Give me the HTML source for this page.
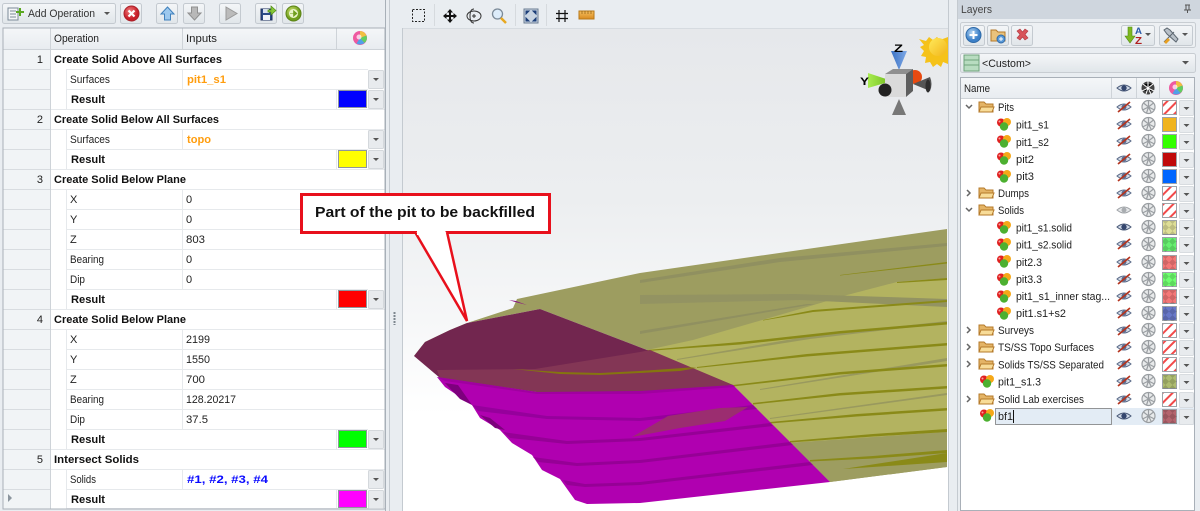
<!DOCTYPE html>
<html><head><meta charset="utf-8"><style>
html,body{margin:0;padding:0;background:#e9edf1;overflow:hidden}
svg{display:block;font-family:"Liberation Sans",Arial,sans-serif;font-size:11px;filter:blur(.3px)}
text{fill:#222}
.b{font-weight:bold;fill:#111}
.o{font-weight:bold;fill:#ff9d0e}
.u{font-weight:bold;fill:#0a0aff}
</style></head><body>
<svg width="1200" height="511" viewBox="0 0 1200 511" xmlns="http://www.w3.org/2000/svg">
<defs>
<linearGradient id="bg" x1="0" y1="0" x2="0" y2="1"><stop offset="0" stop-color="#e6e8eb"/><stop offset=".35" stop-color="#eceef0"/><stop offset=".6" stop-color="#f6f7f8"/><stop offset=".8" stop-color="#fff"/></linearGradient>
<linearGradient id="bt" x1="0" y1="0" x2="0" y2="1"><stop offset="0" stop-color="#f4f6f8"/><stop offset="1" stop-color="#e0e5e9"/></linearGradient>
<linearGradient id="hd" x1="0" y1="0" x2="0" y2="1"><stop offset="0" stop-color="#f4f6f8"/><stop offset="1" stop-color="#e8ecf0"/></linearGradient>
<radialGradient id="red" cx=".4" cy=".35"><stop offset="0" stop-color="#f08080"/><stop offset="1" stop-color="#c81e28"/></radialGradient>
<radialGradient id="grn" cx=".4" cy=".35"><stop offset="0" stop-color="#cde070"/><stop offset="1" stop-color="#6f9e1c"/></radialGradient>
<radialGradient id="blu" cx=".4" cy=".35"><stop offset="0" stop-color="#b8d8f4"/><stop offset="1" stop-color="#3c80c8"/></radialGradient>
<linearGradient id="sunG" x1="0" y1="0" x2="1" y2="1"><stop offset="0" stop-color="#ffe95a"/><stop offset="1" stop-color="#f2b51a"/></linearGradient>
<linearGradient id="coneB" x1="0" y1="0" x2="1" y2="0"><stop offset="0" stop-color="#3b72c4"/><stop offset="1" stop-color="#7fa9e6"/></linearGradient>
<linearGradient id="coneG" x1="0" y1="0" x2="1" y2="0"><stop offset="0" stop-color="#a8ec50"/><stop offset="1" stop-color="#6cb818"/></linearGradient>
<linearGradient id="rul" x1="0" y1="0" x2="0" y2="1"><stop offset="0" stop-color="#f6c060"/><stop offset="1" stop-color="#d88a20"/></linearGradient>
<pattern id="h" width="7" height="7" patternUnits="userSpaceOnUse" patternTransform="rotate(-45)"><rect width="7" height="7" fill="#fff"/><rect width="7" height="2" fill="#f24a4a"/></pattern>
<pattern id="d" width="7" height="7" patternUnits="userSpaceOnUse"><path d="M3.5 0L7 3.5 3.5 7 0 3.5z" fill="#000" fill-opacity=".15"/></pattern>
<g id="dd"><rect x=".5" y=".5" width="15" height="18" rx="1" fill="#e8ebee" stroke="#d4d8dc"/><path d="M5 8h6l-3 3z" fill="#555"/></g>
<g id="dl"><rect x=".5" y=".5" width="14" height="15" rx="1" fill="#e8ebee" stroke="#d8dce0"/><path d="M4.500 7h6l-3 3z" fill="#555"/></g>
<g id="ly"><circle cx="-3" cy="-1.500" r="4" fill="#e02020"/><circle cx="3" cy="-2" r="4" fill="#f5a818"/><circle cx="0" cy="2.500" r="4.200" fill="#4cb030"/><circle cx="-4.500" cy="-2.500" r="1" fill="#f8a0a0"/></g>
<g id="fd"><path d="M-7 5V-5h5l2 2h7v8z" fill="#e4b466" stroke="#b57a2a"/><path d="M-7 5l2-5h13l-2 5z" fill="#f8dc98" stroke="#b57a2a"/></g>
<g id="ey"><path d="M-7 0Q0-6 7 0Q0 6-7 0z" fill="#cfd8e6" stroke="#4a5a78"/><circle r="2.700" fill="#34466e"/></g>
<g id="ex"><path d="M-7 0Q0-6 7 0Q0 6-7 0z" fill="#d4dbe6" stroke="#5a6a88"/><circle r="2.500" fill="#5c6c90"/><path d="M-6 5L6-5" stroke="#b5341e" stroke-width="1.700"/></g>
<g id="eg"><path d="M-7 0Q0-6 7 0Q0 6-7 0z" fill="#e4e6e8" stroke="#a0a4a8"/><circle r="2.500" fill="#a8acb0"/></g>
<g id="wh" fill="none" stroke="#9a9ea2" stroke-width="1.200"><circle r="6.500" fill="#e8eaeb"/><path d="M0-6.500V0M-6 3L0 0 6 3M-5-4L0 0 5-4M0 0L-2 6M0 0L3 6"/></g>
<g id="cb"><rect x="-.5" y="-.5" width="21" height="20" rx="2" fill="url(#bt)" stroke="#c4cad0"/></g>
</defs>

<rect width="1200" height="511" fill="#e9edf1"/>

<!-- LEFT TOOLBAR -->
<rect x="2.500" y="3.500" width="113" height="20" rx="2" fill="url(#bt)" stroke="#c4cad0"/>
<rect x="8" y="8" width="10" height="12" fill="#f4f6f8" stroke="#7b8a98"/><path d="M10 11h6M10 14h6M10 17h6" stroke="#7b8a98"/><path d="M16 11h3V8h2v3h3v2h-3v3h-2v-3h-3z" fill="#5aa820"/>
<text x="28" y="17" textLength="67" lengthAdjust="spacingAndGlyphs" style="fill:#333">Add Operation</text>
<path d="M104 12h6l-3 3z" fill="#555"/>
<use href="#cb" x="121" y="4"/><circle cx="131.500" cy="13.500" r="7.500" fill="url(#red)" stroke="#a82028"/><path d="M128.500 10.500l6 6M134.500 10.500l-6 6" stroke="#fff" stroke-width="2.200"/>
<use href="#cb" x="157" y="4"/><path d="M167.500 7l6.500 7h-3.500v6h-6v-6H161z" fill="#9cc8ee" stroke="#3f80bc"/>
<use href="#cb" x="184" y="4"/><path d="M194.500 20l6.500-7h-3.500V7h-6v6H188z" fill="#b8b8b8" stroke="#909090"/>
<use href="#cb" x="220" y="4"/><path d="M226 7l11 6.500-11 6.500z" fill="#bbb" stroke="#999"/>
<use href="#cb" x="256" y="4"/><path d="M261 9h11v11h-11z" fill="#2a4a86" stroke="#1c2e5c"/><rect x="263" y="9" width="6" height="4" fill="#d8e0ee"/><rect x="263" y="15" width="7" height="5" fill="#eef2f8"/><path d="M268 10h3V6l5 4.500-5 4.500v-3h-3z" fill="#86c838" stroke="#4f8a16" stroke-width=".7"/>
<use href="#cb" x="283" y="4"/><circle cx="293.500" cy="13.500" r="7.500" fill="url(#grn)" stroke="#5a8214"/><circle cx="293.500" cy="13.500" r="4.500" fill="#eaf4c8"/><path d="M290 13.500h3.500v-3l3.500 3-3.500 3v-3" fill="#6f9e1c" stroke="#6f9e1c" stroke-width=".6"/>

<!-- GRID -->
<rect x="3" y="28" width="382" height="481" fill="#fff"/>
<rect x="3" y="28" width="47" height="481" fill="#f1f4f6"/>
<rect x="3" y="28" width="382" height="21" fill="url(#hd)"/>
<g stroke="#d8dce0" fill="none">
<path d="M3.500 69.500h47M3.500 89.500h47M3.500 109.500h47M3.500 129.500h47M3.500 149.500h47M3.500 169.500h47M3.500 189.500h47M3.500 209.500h47M3.500 229.500h47M3.500 249.500h47M3.500 269.500h47M3.500 289.500h47M3.500 309.500h47M3.500 329.500h47M3.500 349.500h47M3.500 369.500h47M3.500 389.500h47M3.500 409.500h47M3.500 429.500h47M3.500 449.500h47M3.500 469.500h47M3.500 489.500h47"/>
</g>
<g stroke="#e6e9ec" fill="none">
<path d="M66.500 69.500H368M66.500 89.500H368M50 109.500H385M50 129.500H385M66.500 149.500H368M50 169.500H385M50 189.500H385M66.500 209.500H385M66.500 229.500H385M66.500 249.500H385M66.500 269.500H385M66.500 289.500H368M50 309.500H385M50 329.500H385M66.500 349.500H385M66.500 369.500H385M66.500 389.500H385M66.500 409.500H385M66.500 429.500H368M50 449.500H385M50 469.500H385M66.500 489.500H368M66.500 508.500H368"/>
<path d="M66.500 69v40M66.500 129v40M66.500 189v120M66.500 329v120M66.500 469v40"/>
<path d="M182.500 69v20M182.500 129v20M182.500 189v100M182.500 329v100M182.500 469v20"/>
<path d="M336.500 89v20M336.500 149v20M336.500 289v20M336.500 429v20M336.500 489v20"/>
</g>
<path d="M3.500 49.500H385M50.500 28v481M182.500 28v21M336.500 28v21" stroke="#ced3d8" fill="none"/>
<rect x="3" y="28" width="382" height="481" fill="none" stroke="#a9b0b8"/>

<text x="54" y="42" textLength="45" lengthAdjust="spacingAndGlyphs">Operation</text>
<text x="186" y="42" textLength="31" lengthAdjust="spacingAndGlyphs">Inputs</text>
<circle cx="360" cy="38" r="7" fill="#ee5aa0"/><path d="M360 31a7 7 0 0 1 6.500 4.500L360 38z" fill="#f0c040"/><path d="M366.500 35.500a7 7 0 0 1-2 7.500L360 38z" fill="#60d060"/><path d="M364.500 43a7 7 0 0 1-8 .5L360 38z" fill="#50a0e8"/><circle cx="359" cy="37" r="2.500" fill="#fff" opacity=".7"/>

<g text-anchor="end"><text x="43" y="63">1</text><text x="43" y="123">2</text><text x="43" y="183">3</text><text x="43" y="323">4</text><text x="43" y="463">5</text></g>
<path d="M8 494l4 4-4 4z" fill="#8c959e"/>

<text class="b" x="54" y="63" textLength="168" lengthAdjust="spacingAndGlyphs">Create Solid Above All Surfaces</text>
<text x="70" y="83" textLength="40" lengthAdjust="spacingAndGlyphs">Surfaces</text><text class="o" x="187" y="83" textLength="39" lengthAdjust="spacingAndGlyphs">pit1_s1</text>
<text class="b" x="71" y="103" textLength="34" lengthAdjust="spacingAndGlyphs">Result</text>
<text class="b" x="54" y="123" textLength="165" lengthAdjust="spacingAndGlyphs">Create Solid Below All Surfaces</text>
<text x="70" y="143" textLength="40" lengthAdjust="spacingAndGlyphs">Surfaces</text><text class="o" x="187" y="143" textLength="24" lengthAdjust="spacingAndGlyphs">topo</text>
<text class="b" x="71" y="163" textLength="34" lengthAdjust="spacingAndGlyphs">Result</text>
<text class="b" x="54" y="183" textLength="132" lengthAdjust="spacingAndGlyphs">Create Solid Below Plane</text>
<text x="70" y="203">X</text><text x="186" y="203">0</text>
<text x="70" y="223">Y</text><text x="186" y="223">0</text>
<text x="70" y="243">Z</text><text x="186" y="243" textLength="19" lengthAdjust="spacingAndGlyphs">803</text>
<text x="70" y="263" textLength="34" lengthAdjust="spacingAndGlyphs">Bearing</text><text x="186" y="263">0</text>
<text x="70" y="283" textLength="15" lengthAdjust="spacingAndGlyphs">Dip</text><text x="186" y="283">0</text>
<text class="b" x="71" y="303" textLength="34" lengthAdjust="spacingAndGlyphs">Result</text>
<text class="b" x="54" y="323" textLength="132" lengthAdjust="spacingAndGlyphs">Create Solid Below Plane</text>
<text x="70" y="343">X</text><text x="186" y="343" textLength="24" lengthAdjust="spacingAndGlyphs">2199</text>
<text x="70" y="363">Y</text><text x="186" y="363" textLength="24" lengthAdjust="spacingAndGlyphs">1550</text>
<text x="70" y="383">Z</text><text x="186" y="383" textLength="19" lengthAdjust="spacingAndGlyphs">700</text>
<text x="70" y="403" textLength="34" lengthAdjust="spacingAndGlyphs">Bearing</text><text x="186" y="403" textLength="50" lengthAdjust="spacingAndGlyphs">128.20217</text>
<text x="70" y="423" textLength="15" lengthAdjust="spacingAndGlyphs">Dip</text><text x="186" y="423" textLength="22" lengthAdjust="spacingAndGlyphs">37.5</text>
<text class="b" x="71" y="443" textLength="34" lengthAdjust="spacingAndGlyphs">Result</text>
<text class="b" x="54" y="463" textLength="85" lengthAdjust="spacingAndGlyphs">Intersect Solids</text>
<text x="70" y="483" textLength="26" lengthAdjust="spacingAndGlyphs">Solids</text><text class="u" x="187" y="483" textLength="81" lengthAdjust="spacingAndGlyphs">#1, #2, #3, #4</text>
<text class="b" x="71" y="503" textLength="34" lengthAdjust="spacingAndGlyphs">Result</text>

<g stroke="#8f969c"><rect x="338.500" y="90.500" width="28" height="17" fill="#0000ff"/><rect x="338.500" y="150.500" width="28" height="17" fill="#ffff00"/><rect x="338.500" y="290.500" width="28" height="17" fill="#ff0000"/><rect x="338.500" y="430.500" width="28" height="17" fill="#00ff00"/><rect x="338.500" y="490.500" width="28" height="17" fill="#ff00ff"/></g>
<use href="#dd" x="368" y="70"/><use href="#dd" x="368" y="90"/><use href="#dd" x="368" y="130"/><use href="#dd" x="368" y="150"/><use href="#dd" x="368" y="290"/><use href="#dd" x="368" y="430"/><use href="#dd" x="368" y="470"/><use href="#dd" x="368" y="490"/>

<!-- SPLITTER -->
<rect x="385" y="0" width="1" height="511" fill="#a8b0b8"/>
<rect x="389" y="0" width="1" height="511" fill="#c4cad0"/>
<path d="M394.500 312v13" stroke="#7d868e" stroke-width="2" stroke-dasharray="2 1"/>

<!-- VIEWPORT -->
<rect x="403" y="28" width="545" height="483" fill="url(#bg)"/>
<path d="M402.500 28V511M948.500 0V511" stroke="#c4cad0"/>
<path d="M403 28.500H948" stroke="#d6dbe0"/>
<path d="M434.500 4v22M515.500 4v22M546.500 4v22" stroke="#d6dade"/>
<rect x="412.500" y="9.500" width="12" height="12" fill="none" stroke="#222" stroke-dasharray="2 1.500"/>
<path d="M450 9l3 3.500h-2V15h2.500v-2l3.500 3-3.500 3v-2H451v2.500h2l-3 3.500-3-3.500h2V17h-2.500v2l-3.500-3 3.500-3v2H449v-2.500h-2z" fill="#111"/>
<g fill="none" stroke="#333"><ellipse cx="474" cy="16" rx="7" ry="5"/><path d="M474 9c-3 0-4 3-4 7s1 7 4 7"/><path d="M472 16h4M474 14v4"/></g>
<circle cx="497.500" cy="14" r="5" fill="#dcecfa" stroke="#7b8a98" stroke-width="1.300"/><path d="M501 18l5 5" stroke="#e8a820" stroke-width="2.500"/>
<rect x="524" y="9" width="14" height="14" fill="#c8d4e2" stroke="#6b7d92"/><path d="M526 11l3 0-3 3zM536 11l-3 0 3 3zM526 21l3 0-3-3zM536 21l-3 0 3-3z" fill="#1c3e78" stroke="#1c3e78"/>
<path d="M559 10v12M565 10v12M556 13.500h12M556 18.500h12" stroke="#111" stroke-width="1.200"/>
<rect x="579" y="11" width="15" height="8" fill="url(#rul)" stroke="#b87818"/><path d="M582 11v3M585 11v3M588 11v3M591 11v3" stroke="#8a5a10" stroke-width=".7"/>

<!-- 3D model -->
<polygon points="414,356 425,342 450,330 467,323 513,308 517,299 640,273 800,250 947,229 947,467 830,482 733,385 647,350 540,309 467,323" fill="#9d9d60"/>
<polygon points="647,350 693,340 807,307 847,295 897,282 947,278 947,432 790,443 733,385" fill="#b3b360"/>
<polygon points="640,295 795,294 947,299 947,307 800,300 640,304" fill="#939362"/>
<polygon points="640,280 780,258 947,243 947,246 780,262 640,283" fill="#909060"/>
<polygon points="640,331 807,304 815,304 640,334" fill="#909060"/>
<polygon points="677,359 810,336 947,321 947,323 810,339 677,360" fill="#99995e"/>
<polygon points="760,389 947,358 947,361 760,390" fill="#99995e"/>
<polygon points="770,418 947,393 947,395 770,419" fill="#99995e"/>
<polygon points="790,443 947,432 947,467 830,482" fill="#9d9d60"/>
<g fill="#8a8a18">
<polygon points="763,320 813,310 947,300 947,302 813,312 763,320.500"/>
<polygon points="647,350 740,342 840,331 947,322 947,324.500 840,333.500 740,344.500 647,351"/>
<polygon points="697,367 807,354 947,343 947,345.500 807,356.500 697,368"/>
<polygon points="733,385 840,372 947,364 947,366.500 840,374.500 733,386.500"/>
<polygon points="753,403 840,393 947,386 947,388.500 840,395.500 753,404.500"/>
<polygon points="770,422 857,414 947,408 947,410.500 857,416.500 770,423.500"/>
<polygon points="790,441 873,434 947,429 947,432 873,436.500 790,442.500"/>
<polygon points="810,460 873,456 947,450 947,453 873,458.500 810,461.500"/>
<polygon points="843,469 947,453 947,462"/>
<polygon points="897,282 947,278 947,280 897,283"/>
<polygon points="840,275 947,262 947,263.500 840,275.500"/>
</g>

<polygon points="414,356 425,342 450,330 467,323 540,309 647,350 733,385 640,393 537,392 440,378" fill="#72264f"/>
<polygon points="437,370 535,369 640,352 650,350 733,385 690,392 640,393 537,392 440,378" fill="#833655"/>
<polygon points="513,369 560,372 600,373 680,369 697,368 680,371 600,375 560,374" fill="#85750f"/>
<polygon points="640,371 697,367 680,370 640,373" fill="#85750f"/>
<polygon points="509,300 516,301 527,305 515,302" fill="#8a1a82"/>

<polygon points="437,377 537,392 640,393 733,385 830,482 640,503 587,504 575,500 560,479 542,470 532,455 512,443 500,430 480,418 472,405 445,387" fill="#b000b0"/>
<polygon points="437,377 537,392 640,391 733,385 735,387 640,394 537,394 445,381" fill="#a000a0"/>
<polygon points="445,383 458,385 472,405 460,399" fill="#7d007d"/>
<polygon points="472,405 547,416 640,418 753,405 757,409 640,421 547,419 478,411" fill="#96009c"/>
<polygon points="480,415 490,418 505,430 495,428" fill="#7d007d"/>
<polygon points="503,432 567,441 640,438 770,423 773,426 640,441 567,444 510,438" fill="#960096"/>
<polygon points="533,457 577,463 640,460 790,442 793,445 640,463 577,466 538,462" fill="#960096"/>
<polygon points="563,480 585,484 640,482 810,462 813,465 640,485 585,487 567,485" fill="#960096"/>
<polygon points="632,437 668,416 720,408 748,407 725,421 680,428" fill="#9b2d70"/>

<!-- Gizmo -->
<path d="M891 51h16l-8 19z" fill="url(#coneB)"/>
<text x="894" y="52" class="b" textLength="9" lengthAdjust="spacingAndGlyphs" style="fill:#000">Z</text>
<path d="M868 73l24 8-24 7z" fill="url(#coneG)"/>
<text x="860" y="85" class="b" textLength="9" lengthAdjust="spacingAndGlyphs" style="fill:#000">Y</text>
<circle cx="915" cy="77" r="7" fill="#e84a10"/>
<path d="M913 84l17-7q3 7 0 14z" fill="#555"/>
<ellipse cx="928" cy="86" rx="2.500" ry="6.500" fill="#2e2e2e"/>
<path d="M892 115l7-16 7 16z" fill="#777"/>
<path d="M885 74l8-5h20l-7 5z" fill="#8f8f8f"/>
<rect x="885" y="74" width="21" height="23" fill="#dadada"/>
<path d="M906 74l7-5v22l-7 6z" fill="#5e5e5e"/>
<circle cx="885" cy="90" r="6.500" fill="#222"/>
<path d="M919 39l7 2 3-4 4 3 4-3 3 3 8-3v27l-5-2-2 5-4-3-4 3-3-5-5 1 1-6-5-1 3-5-4-4 4-2z" fill="#f5c21a"/>
<circle cx="938" cy="47" r="9" fill="url(#sunG)"/>

<!-- Callout -->
<rect x="301.500" y="194.500" width="248" height="38" fill="#fff" stroke="#e8101c" stroke-width="3"/>
<path d="M415 232L467 321 447 232" fill="#fff" stroke="#e8101c" stroke-width="2.500"/>
<rect x="417" y="229" width="28.500" height="6" fill="#fff"/>
<text x="315" y="217" textLength="220" lengthAdjust="spacingAndGlyphs" style="font-weight:bold;font-size:15px;fill:#111">Part of the pit to be backfilled</text>

<!-- LAYERS -->
<path d="M957.500 0V511" stroke="#c4cad0"/>
<rect x="958" y="0" width="242" height="19" fill="#cfd6de"/>
<text x="961" y="13" textLength="31" lengthAdjust="spacingAndGlyphs" style="fill:#444">Layers</text>
<path d="M1185 5h5M1186 5v5h3V5M1184 10h7M1187.500 10v3" stroke="#555" fill="none"/>
<rect x="960.500" y="22.500" width="235" height="25" rx="2" fill="#edf0f3" stroke="#c8cdd2"/>
<use href="#cb" x="964" y="26"/><circle cx="973.500" cy="35" r="7.500" fill="url(#blu)" stroke="#2f6aa8"/><path d="M973.500 31v8M969.500 35h8" stroke="#fff" stroke-width="2"/>
<use href="#cb" x="988" y="26"/><path d="M991 41V30h5l2 2h7v9z" fill="#e9c27c" stroke="#b57a2a"/><circle cx="1001" cy="39" r="4" fill="#5a9ad8" stroke="#2f6aa8"/><path d="M1001 37v4M999 39h4" stroke="#fff"/>
<use href="#cb" x="1012" y="26"/><path d="M1017 31l3-2 2.500 3 2.500-3 3 2-3 3.500 3 3.500-3 2-2.500-3-2.500 3-3-2 3-3.500z" fill="#d8545a" stroke="#b23a40" stroke-width=".6"/>
<rect x="1121.500" y="25.500" width="33" height="20" rx="2" fill="url(#bt)" stroke="#c4cad0"/>
<path d="M1128 27h4v9h3l-5 7-5-7h3z" fill="#7fb820" stroke="#4f8a16" stroke-width=".6"/>
<text x="1135" y="34" class="b" textLength="7" lengthAdjust="spacingAndGlyphs" style="font-size:9px;fill:#2a5aa8">A</text><text x="1135" y="44" class="b" textLength="7" lengthAdjust="spacingAndGlyphs" style="font-size:10px;fill:#b02020">Z</text>
<path d="M1145 33h6l-3 3z" fill="#555"/>
<rect x="1159.500" y="25.500" width="33" height="20" rx="2" fill="url(#bt)" stroke="#c4cad0"/>
<path d="M1164 42l10-10M1164 30l3-2 3 2 8 9-2 3-9-8z" fill="#b8c0c8" stroke="#5c6670"/><path d="M1164 42l4-4 2 2-4 4z" fill="#e8a020"/>
<path d="M1182 33h6l-3 3z" fill="#555"/>
<rect x="960.500" y="53.500" width="235" height="19" rx="2" fill="url(#bt)" stroke="#c8cdd2"/>
<rect x="964" y="55" width="15" height="16" fill="#b8dcc0" stroke="#6fa37c"/><path d="M964 60h15M964 65h15" stroke="#6fa37c"/>
<text x="982" y="67" textLength="49" lengthAdjust="spacingAndGlyphs">&lt;Custom&gt;</text>
<path d="M1182 61h7l-3.500 3.500z" fill="#555"/>

<rect x="960.500" y="77.500" width="234" height="433" fill="#fff" stroke="#a9b0b8"/>
<rect x="961" y="78" width="233" height="20" fill="url(#hd)"/>
<path d="M961 98.500h233M1111.500 78v20M1136.500 78v20M1159.500 78v20" stroke="#ced3d8"/>
<text x="964" y="92" textLength="26" lengthAdjust="spacingAndGlyphs">Name</text>
<use href="#ey" x="1124" y="88"/>
<circle cx="1148" cy="88" r="6.500" fill="#444"/><path d="M1148 81.500V88M1142 91l6-3 6 3M1143 84l5 4 5-4M1148 88l-2 6M1148 88l3 6" stroke="#fff"/>
<circle cx="1176" cy="88" r="7" fill="#ee5aa0"/><path d="M1176 81a7 7 0 0 1 6.500 4.500L1176 88z" fill="#f0c040"/><path d="M1182.500 85.500a7 7 0 0 1-2 7.500L1176 88z" fill="#60d060"/><path d="M1180.500 93a7 7 0 0 1-8 .5L1176 88z" fill="#50a0e8"/><circle cx="1175" cy="87" r="2.500" fill="#fff" opacity=".7"/>

<!-- bf1 highlight -->
<rect x="995.500" y="408.500" width="116" height="16" fill="#e3ecf5" stroke="#333" stroke-dasharray="1 1"/>
<rect x="1112" y="408" width="82" height="17" fill="#e3ecf5"/>
<path d="M1013.500 410v13" stroke="#111"/>

<!-- names -->
<text x="998" y="111" textLength="16" lengthAdjust="spacingAndGlyphs">Pits</text>
<text x="1016" y="128.500" textLength="33" lengthAdjust="spacingAndGlyphs">pit1_s1</text>
<text x="1016" y="146" textLength="33" lengthAdjust="spacingAndGlyphs">pit1_s2</text>
<text x="1016" y="163" textLength="18" lengthAdjust="spacingAndGlyphs">pit2</text>
<text x="1016" y="180" textLength="18" lengthAdjust="spacingAndGlyphs">pit3</text>
<text x="998" y="197" textLength="31" lengthAdjust="spacingAndGlyphs">Dumps</text>
<text x="998" y="214" textLength="26" lengthAdjust="spacingAndGlyphs">Solids</text>
<text x="1016" y="231.500" textLength="56" lengthAdjust="spacingAndGlyphs">pit1_s1.solid</text>
<text x="1016" y="248.500" textLength="56" lengthAdjust="spacingAndGlyphs">pit1_s2.solid</text>
<text x="1016" y="266" textLength="26" lengthAdjust="spacingAndGlyphs">pit2.3</text>
<text x="1016" y="283" textLength="26" lengthAdjust="spacingAndGlyphs">pit3.3</text>
<text x="1016" y="300" textLength="94" lengthAdjust="spacingAndGlyphs">pit1_s1_inner stag...</text>
<text x="1016" y="317" textLength="50" lengthAdjust="spacingAndGlyphs">pit1.s1+s2</text>
<text x="998" y="334" textLength="36" lengthAdjust="spacingAndGlyphs">Surveys</text>
<text x="998" y="351" textLength="96" lengthAdjust="spacingAndGlyphs">TS/SS Topo Surfaces</text>
<text x="998" y="368.500" textLength="106" lengthAdjust="spacingAndGlyphs">Solids TS/SS Separated</text>
<text x="998" y="385.500" textLength="43" lengthAdjust="spacingAndGlyphs">pit1_s1.3</text>
<text x="998" y="403" textLength="86" lengthAdjust="spacingAndGlyphs">Solid Lab exercises</text>
<text x="998" y="420" textLength="15" lengthAdjust="spacingAndGlyphs">bf1</text>

<!-- expanders -->
<g fill="none" stroke="#666" stroke-width="1.500">
<path d="M966 105l3 3 3-3M966 208l3 3 3-3"/>
<path d="M967 190l3 3-3 3M967 327l3 3-3 3M967 344l3 3-3 3M967 361l3 3-3 3M967 396l3 3-3 3"/>
</g>

<!-- icons -->
<use href="#fd" x="986" y="107"/><use href="#fd" x="986" y="193"/><use href="#fd" x="986" y="210"/><use href="#fd" x="986" y="330"/><use href="#fd" x="986" y="347"/><use href="#fd" x="986" y="364"/><use href="#fd" x="986" y="399"/>
<use href="#ly" x="1004" y="124"/><use href="#ly" x="1004" y="141"/><use href="#ly" x="1004" y="158"/><use href="#ly" x="1004" y="176"/><use href="#ly" x="1004" y="227"/><use href="#ly" x="1004" y="244"/><use href="#ly" x="1004" y="261"/><use href="#ly" x="1004" y="279"/><use href="#ly" x="1004" y="296"/><use href="#ly" x="1004" y="313"/><use href="#ly" x="987" y="381"/><use href="#ly" x="987" y="415"/>

<use href="#ex" x="1124" y="107"/><use href="#ex" x="1124" y="124"/><use href="#ex" x="1124" y="141"/><use href="#ex" x="1124" y="159"/><use href="#ex" x="1124" y="176"/><use href="#ex" x="1124" y="193"/><use href="#eg" x="1124" y="210"/><use href="#ey" x="1124" y="227"/><use href="#ex" x="1124" y="244"/><use href="#ex" x="1124" y="262"/><use href="#ex" x="1124" y="279"/><use href="#ex" x="1124" y="296"/><use href="#ex" x="1124" y="313"/><use href="#ex" x="1124" y="330"/><use href="#ex" x="1124" y="347"/><use href="#ex" x="1124" y="364"/><use href="#ex" x="1124" y="381"/><use href="#ex" x="1124" y="399"/><use href="#ey" x="1124" y="416"/>

<use href="#wh" x="1148.500" y="107"/><use href="#wh" x="1148.500" y="124"/><use href="#wh" x="1148.500" y="141"/><use href="#wh" x="1148.500" y="159"/><use href="#wh" x="1148.500" y="176"/><use href="#wh" x="1148.500" y="193"/><use href="#wh" x="1148.500" y="210"/><use href="#wh" x="1148.500" y="227"/><use href="#wh" x="1148.500" y="244"/><use href="#wh" x="1148.500" y="262"/><use href="#wh" x="1148.500" y="279"/><use href="#wh" x="1148.500" y="296"/><use href="#wh" x="1148.500" y="313"/><use href="#wh" x="1148.500" y="330"/><use href="#wh" x="1148.500" y="347"/><use href="#wh" x="1148.500" y="364"/><use href="#wh" x="1148.500" y="381"/><use href="#wh" x="1148.500" y="399"/><use href="#wh" x="1148.500" y="416"/>

<!-- swatches -->
<g stroke="#9ea3a8">
<rect x="1162.500" y="100.500" width="14" height="14" fill="url(#h)"/>
<rect x="1162.500" y="117.500" width="14" height="14" fill="#f0b41e"/>
<rect x="1162.500" y="134.500" width="14" height="14" fill="#33ff00"/>
<rect x="1162.500" y="152.500" width="14" height="14" fill="#c00a0a"/>
<rect x="1162.500" y="169.500" width="14" height="14" fill="#0066ff"/>
<rect x="1162.500" y="186.500" width="14" height="14" fill="url(#h)"/>
<rect x="1162.500" y="203.500" width="14" height="14" fill="url(#h)"/>
<rect x="1162.500" y="220.500" width="14" height="14" fill="#dede96"/>
<rect x="1162.500" y="237.500" width="14" height="14" fill="#66f070"/>
<rect x="1162.500" y="255.500" width="14" height="14" fill="#f47878"/>
<rect x="1162.500" y="272.500" width="14" height="14" fill="#70ff70"/>
<rect x="1162.500" y="289.500" width="14" height="14" fill="#f47878"/>
<rect x="1162.500" y="306.500" width="14" height="14" fill="#6878c8"/>
<rect x="1162.500" y="323.500" width="14" height="14" fill="url(#h)"/>
<rect x="1162.500" y="340.500" width="14" height="14" fill="url(#h)"/>
<rect x="1162.500" y="357.500" width="14" height="14" fill="url(#h)"/>
<rect x="1162.500" y="374.500" width="14" height="14" fill="#aebc70"/>
<rect x="1162.500" y="392.500" width="14" height="14" fill="url(#h)"/>
<rect x="1162.500" y="409.500" width="14" height="14" fill="#b4646e"/>
</g>
<g fill="url(#d)">
<rect x="1163" y="221" width="14" height="14"/><rect x="1163" y="238" width="14" height="14"/><rect x="1163" y="256" width="14" height="14"/><rect x="1163" y="273" width="14" height="14"/><rect x="1163" y="290" width="14" height="14"/><rect x="1163" y="307" width="14" height="14"/><rect x="1163" y="375" width="14" height="14"/><rect x="1163" y="410" width="14" height="14"/>
</g>
<use href="#dl" x="1179" y="100"/><use href="#dl" x="1179" y="117"/><use href="#dl" x="1179" y="134"/><use href="#dl" x="1179" y="152"/><use href="#dl" x="1179" y="169"/><use href="#dl" x="1179" y="186"/><use href="#dl" x="1179" y="203"/><use href="#dl" x="1179" y="220"/><use href="#dl" x="1179" y="237"/><use href="#dl" x="1179" y="255"/><use href="#dl" x="1179" y="272"/><use href="#dl" x="1179" y="289"/><use href="#dl" x="1179" y="306"/><use href="#dl" x="1179" y="323"/><use href="#dl" x="1179" y="340"/><use href="#dl" x="1179" y="357"/><use href="#dl" x="1179" y="374"/><use href="#dl" x="1179" y="392"/><use href="#dl" x="1179" y="409"/>
</svg>
</body></html>
